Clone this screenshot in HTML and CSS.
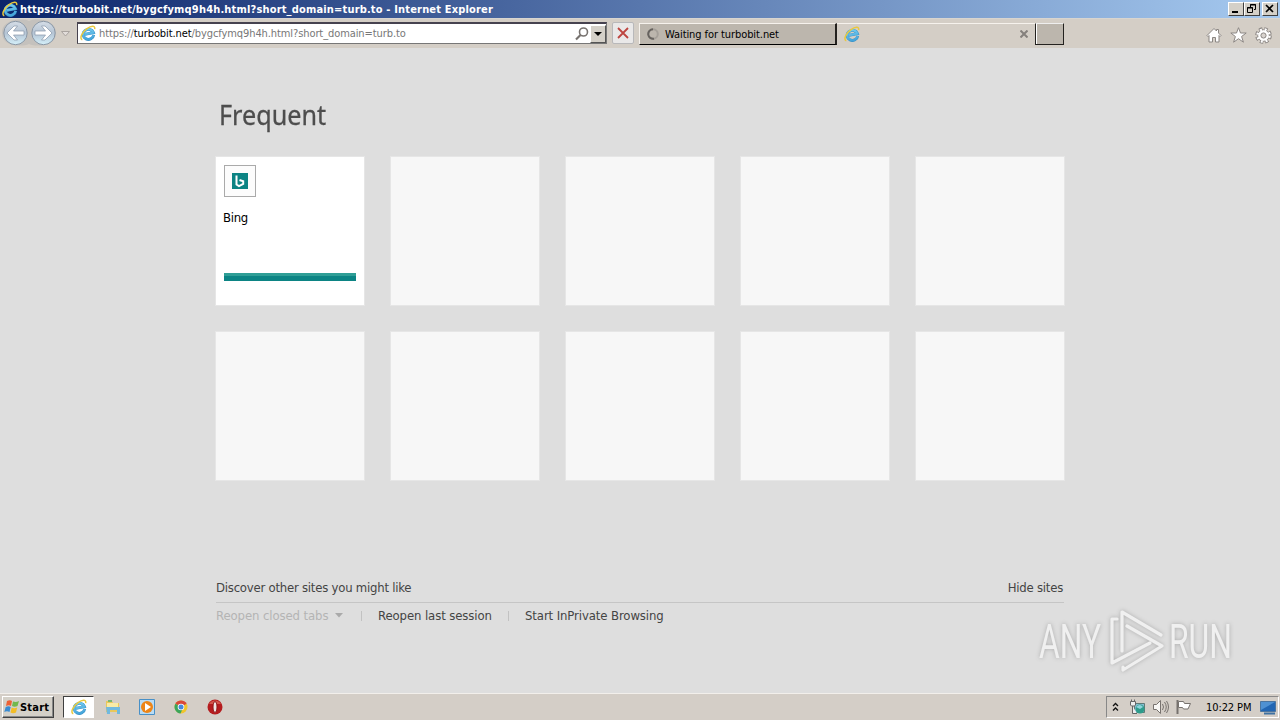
FILE: index.html
```html
<!DOCTYPE html>
<html lang="en">
<head>
  <meta charset="UTF-8">
  <title>https://turbobit.net/bygcfymq9h4h.html?short_domain=turb.to - Internet Explorer</title>
  <link rel="stylesheet" href="styles.css">
</head>
<body>
  <svg class="defs" width="0" height="0">
    <defs>
      <linearGradient id="blue" x1="0" y1="0" x2="0" y2="1">
        <stop offset="0" stop-color="#70c9ee"/>
        <stop offset="1" stop-color="#45a5da"/>
      </linearGradient>
      <linearGradient id="ball" x1="0" y1="0" x2="0" y2="1">
        <stop offset="0" stop-color="#d5dde6"/>
        <stop offset="0.5" stop-color="#b5c4d4"/>
        <stop offset="1" stop-color="#d4f0fa"/>
      </linearGradient>
      <symbol id="ie" viewBox="0 0 16 16">
        <g transform="rotate(-12 8 8)">
          <path d="M13.200 11A5.300 5 0 1 1 13.400 8.700H4.500" fill="none" stroke="#378fc5" stroke-width="2.900"/>
          <path d="M13 11A5.200 5 0 1 1 13.300 8.700H4.500" fill="none" stroke="url(#blue)" stroke-width="2.200"/>
        </g>
        <path d="M2.300 14.700C-.8 14 1.600 7.300 7 3.600c4-2.800 8.400-3.600 7.700.5" fill="none" stroke="#e9c83d" stroke-width="1.500"/>
      </symbol>
    </defs>
  </svg>

  <header class="titlebar">
    <svg class="title-icon" width="16" height="16"><use href="#ie"/></svg>
    <span class="title">https://turbobit.net/bygcfymq9h4h.html?short_domain=turb.to - Internet Explorer</span>
    <div class="window-buttons">
      <button><svg width="12" height="10"><path d="M2 8h6" stroke="#000" stroke-width="2"/></svg></button>
      <button><svg width="12" height="10" fill="none" stroke="#000"><path d="M4.500 3V.500h5v5H8M4 1h6M1.500 3.500h5v5h-5zM1 4h6"/></svg></button>
      <button class="close"><svg width="12" height="10"><path d="M2 1l7 7M9 1L2 8" stroke="#000" stroke-width="1.700"/></svg></button>
    </div>
  </header>

  <nav class="toolbar">
    <svg class="history" width="77" height="30">
      <path d="M2 15C2 1 22 0 29 3c8-3 27-2 27 12S36 29 29 26C22 29 2 29 2 15z" fill="#c4c1bd"/>
      <circle cx="15.500" cy="15" r="11.700" fill="url(#ball)" stroke="#8b98a6"/>
      <circle cx="43.500" cy="15" r="11.700" fill="url(#ball)" stroke="#8b98a6"/>
      <g fill="#fff" stroke="#8797ab" stroke-width=".7">
        <path d="M7 15l7-7h3.500l-4 5H24v4H13.500l4 5H14z"/>
        <path d="M52 15l-7-7h-3.500l4 5H35v4h10.500l-4 5H45z"/>
      </g>
      <path d="M61.500 13.500h8l-4 4.500z" fill="#e2ddda" stroke="#aaa4a0"/>
    </svg>
    <div class="address">
      <svg width="16" height="16"><use href="#ie"/></svg>
      <span class="url">https://<b>turbobit.net</b>/bygcfymq9h4h.html?short_domain=turb.to</span>
      <svg class="search" width="14" height="14" fill="none" stroke="#77726f"><circle cx="8.500" cy="5" r="4" stroke-width="1.600"/><path d="M5.500 8L1 12.500" stroke-width="2.200"/></svg>
      <button class="drop"><svg width="8" height="5"><path d="M0 0h8L4 4z"/></svg></button>
    </div>
    <button class="stop"><svg width="12" height="12"><path d="M1 1l10 10M11 1L1 11" stroke="#bd4540" stroke-width="1.800"/></svg></button>
    <div class="tab waiting">
      <svg width="12" height="12" fill="none" stroke-width="2"><circle cx="6" cy="6" r="4.800" stroke="#a5a099"/><path d="M7 10.700A4.800 4.800 0 1 1 6 1.200" stroke="#67635f"/></svg>
      <span>Waiting for turbobit.net</span>
    </div>
    <div class="tab active">
      <svg width="16" height="16"><use href="#ie"/></svg>
      <svg width="8" height="8"><path d="M.5.500l7 7M7.500.500l-7 7" stroke="#85807c" stroke-width="2"/></svg>
    </div>
    <div class="tab new-tab"></div>
    <div class="tools">
      <svg width="16" height="16"><path d="M1 8.500L8 1.500l2.500 2.500V2.500h2v3.500L15 8.500l-1 1-1-1V15H9.500v-4.500h-3V15H3V8.500l-1 1z" fill="#fff" stroke="#8b8683"/></svg>
      <svg width="17" height="16"><path d="M8.500.700l2 5.300h5.700l-4.600 3.500 1.800 5.700-4.900-3.500-4.900 3.500 1.800-5.700L.8 6h5.700z" fill="#fff" stroke="#8b8683"/></svg>
      <svg width="17" height="17" viewBox="-8.500 -8.500 17 17">
        <circle r="6.300" fill="none" stroke="#8b8683" stroke-width="4" stroke-dasharray="3.100 1.848"/>
        <circle r="5.800" fill="#fff" stroke="#8b8683"/>
        <circle r="6.100" fill="none" stroke="#fff" stroke-width="2.400" stroke-dasharray="1.900 2.891" stroke-dashoffset="-.5"/>
        <circle r="2.600" fill="#d8d3ce" stroke="#8b8683"/>
      </svg>
    </div>
  </nav>

  <main class="page">
    <h1>Frequent</h1>
    <section class="tiles">
      <article class="tile site">
        <div class="favicon"><svg width="16" height="16"><path d="M0 0h16v16H0z" fill="#0c8484"/><path d="M4.500 2.500v9l2.500 1.600 4.200-2.200V8.300L7.500 7" fill="none" stroke="#fff" stroke-width="2"/></svg></div>
        <span>Bing</span>
        <div class="usage"></div>
      </article>
      <article class="tile"></article>
      <article class="tile"></article>
      <article class="tile"></article>
      <article class="tile"></article>
      <article class="tile"></article>
      <article class="tile"></article>
      <article class="tile"></article>
      <article class="tile"></article>
      <article class="tile"></article>
    </section>
    <div class="discover">
      <span class="discover-text">Discover other sites you might like</span>
      <span class="hide">Hide sites</span>
    </div>
    <div class="links">
      <span class="disabled">Reopen closed tabs</span>
      <svg class="caret" width="8" height="5"><path d="M0 0h8L4 4.500z" fill="#aaa"/></svg>
      <i></i>
      <span class="last">Reopen last session</span>
      <i></i>
      <span class="private">Start InPrivate Browsing</span>
    </div>
    <svg class="watermark" width="240" height="80">
      <g font-family="Roboto, sans-serif" font-size="49" fill="#f0f0f0">
        <text x="9" y="53" textLength="62" lengthAdjust="spacingAndGlyphs">ANY</text>
        <text x="139" y="53" textLength="63" lengthAdjust="spacingAndGlyphs">RUN</text>
      </g>
      <g fill="none" stroke="#f0f0f0" stroke-width="3.200" stroke-linejoin="round" stroke-linecap="round">
        <path d="M92 46V7l39 23"/>
        <path d="M87 14h-5v44l38-20"/>
        <path d="M97 21l35 20-39 24v-3"/>
      </g>
    </svg>
  </main>

  <footer class="taskbar">
    <button class="start">
      <svg width="16" height="16"><path d="M3 2q3-1.500 5 0L7 7Q5 5.500 2 7z" fill="#ed6135"/><path d="M9 2.500q3 1 6-.5l-1.500 5q-3 1.500-5.500 0z" fill="#72b84d"/><path d="M1.700 8q3-1.500 5 0l-1.200 5Q3 11.500.300 13z" fill="#398bd2"/><path d="M7.700 8.500q2.500 1.500 5.500 0L12 13.500q-3 1.500-5.500 0z" fill="#f3bd27"/></svg>
      Start
    </button>
    <div class="task"><svg width="16" height="16"><use href="#ie"/></svg></div>
    <div class="launch">
      <svg width="16" height="16"><path d="M1 2h6l1 2h6v9H1z" fill="#e9c85b"/><path d="M2 4h11v5H2z" fill="#f8eba6"/><path d="M1 8h14v7h-3v-4H5v4H2z" fill="#70b9df"/><path d="M3 1h4v2H3z" fill="#78b672"/></svg>
      <svg width="16" height="16"><path d="M.5.500h15v15H.5z" fill="#b9dcf5" stroke="#4890c7"/><circle cx="8" cy="8" r="6" fill="#ed8518"/><path d="M6 4l6 4-6 4z" fill="#fff"/></svg>
      <svg width="16" height="16"><circle cx="8" cy="8" r="6.500" fill="#f0c52d"/><path d="M8 8L2.400 4.700A6.500 6.500 0 0 1 13.600 4.700z" fill="#d94839"/><path d="M8 8L2.400 4.700A6.500 6.500 0 0 0 7.500 14.500L10 9z" fill="#3ba55c"/><circle cx="8" cy="8" r="3.300" fill="#fff"/><circle cx="8" cy="8" r="2.500" fill="#4688dc"/></svg>
      <svg width="16" height="16"><circle cx="8" cy="8" r="7.500" fill="#b51c1e"/><path d="M2 5a7 7 0 0 1 12 0z" fill="#d3564c"/><ellipse cx="8" cy="8" rx="2" ry="5.500" fill="#f0e6e3" stroke="#8f1719"/></svg>
    </div>
    <div class="tray">
      <svg class="chevrons" width="8" height="11" fill="none" stroke="#111" stroke-width="1.300"><path d="M1 4l2.500-2.500L6 4M1 8.500L3.500 6 6 8.500"/></svg>
      <svg class="network" width="17" height="17"><path d="M5.500 4.500h10v9h-10z" fill="#85bdd1" stroke="#5f7a77"/><circle cx="11" cy="10" r="4.500" fill="#2e9c8b"/><path d="M7 8q4-4 7 0l-3 2z" fill="#8fd4dd"/><path d="M1.500 2.500h5V6l-1 1h-3l-1-1zM2.500.500v2M5.500.500v2M3.500 7v7.500H8" fill="#eee" stroke="#666"/></svg>
      <svg class="volume" width="17" height="16" fill="none" stroke="#77726e"><path d="M1.500 5.500h3l4-4v13l-4-4h-3z" fill="#f8f7f5"/><path d="M10.500 5q2 3 0 6M12.500 3q3.500 5 0 10M14.500 2q4 6 0 12"/></svg>
      <svg class="flag" width="17" height="16"><path d="M2.500 1v14" stroke="#77726e" stroke-width="2"/><path d="M3.500 2.500h5l1 2h6L13 10H8.500l-1-1.500h-4z" fill="#fff" stroke="#77726e"/></svg>
      <span class="clock">10:22 PM</span>
      <svg class="desktop" width="16" height="15"><path d="M.5 1.500h15v10H.5z" fill="#2266b3" stroke="#4c759f"/><path d="M1 2h14L1 10z" fill="#4f91d2"/><path d="M4 13.500h11" stroke="#3e71a1" stroke-width="2"/></svg>
    </div>
  </footer>
</body>
</html>
```
FILE: styles.css
```css
* {
  box-sizing: border-box;
}

body {
  width: 1280px;
  height: 720px;
  margin: 0;
  overflow: hidden;
  display: flex;
  flex-direction: column;
  background: #dedede;
  font-family: "DejaVu Sans Condensed", "DejaVu Sans", sans-serif;
  font-size: 11px;
  color: #000;
}

svg {
  display: block;
  flex: none;
}

button {
  padding: 0;
  border: 0;
  font: inherit;
  color: inherit;
}

span {
  white-space: nowrap;
}

.defs {
  position: absolute;
}

.titlebar {
  height: 18px;
  flex: none;
  display: flex;
  align-items: center;
  padding: 0 2px;
  background: linear-gradient(90deg, #0a246a, #a6caf0);
}

.title {
  margin-left: 2px;
  color: #fff;
  font-weight: bold;
  letter-spacing: 0.17px;
}

.window-buttons {
  display: flex;
  margin-left: auto;
}

.window-buttons button {
  width: 16px;
  height: 14px;
  padding: 1px;
  background: #d4d0c8;
  border: 1px solid;
  border-color: #fff #404040 #404040 #fff;
}

.window-buttons .close {
  margin-left: 2px;
}

.toolbar {
  height: 30px;
  flex: none;
  display: flex;
  background: #d4cec6;
  border-top: 1px solid #d8d5d0;
}

.history {
  margin-top: -1px;
}

.address {
  width: 530px;
  height: 22px;
  margin-top: 3px;
  padding-left: 2px;
  display: flex;
  align-items: center;
  background: #fff;
  border: 1px solid #777;
  border-top: 2px solid #46424f;
  border-left-color: #46424f;
}

.address > svg:first-child {
  margin-top: -2px;
}

.url {
  margin-left: 3px;
  color: #777;
  letter-spacing: -0.09px;
}

.url b {
  color: #000;
  font-weight: normal;
}

.search {
  margin-left: auto;
}

.drop {
  width: 16px;
  height: 18px;
  margin-left: 1px;
  padding: 1px 3px 0;
  background: #d4d0c8;
  border: 1px solid;
  border-color: #fff #555 #555 #fff;
}

.stop {
  width: 22px;
  height: 22px;
  margin: 3px 5px 0 5px;
  padding: 4px;
  background: #e9e8e8;
  border: 1px solid #b8b8ba;
  border-radius: 2px;
}

.tab {
  height: 22px;
  display: flex;
  align-items: center;
  margin-top: 4px;
  border-top: 1px solid #f6f2ed;
}

.waiting {
  width: 198px;
  padding-left: 7px;
  background: #bcb6ad;
  border-left: 1px solid #f6f2ed;
  border-right: 2px solid #24221f;
  border-bottom: 1px solid #000;
}

.waiting span {
  margin-left: 6px;
  letter-spacing: -0.08px;
}

.active {
  width: 198px;
  padding: 0 7px;
  justify-content: space-between;
}

.active svg {
  margin-top: -2px;
}

.new-tab {
  width: 29px;
  background: #bcb6ad;
  border: 1px solid #24221f;
  border-top-color: #eee;
  box-shadow: inset 1px 0 #fff;
}

.tools {
  display: flex;
  align-items: center;
  gap: 8px;
  margin-left: auto;
  padding: 3px 8px 0 0;
}

.page {
  position: relative;
  flex: 1;
  width: 848px;
  margin: 0 auto;
  padding-top: 48px;
}

h1 {
  height: 36px;
  margin: 0 0 25px 3px;
  color: #4d4d4d;
  font: 28px/36px "Noto Sans", sans-serif;
  transform: scaleX(0.9);
  transform-origin: left;
  -webkit-text-stroke: 0.3px #4d4d4d;
}

.tiles {
  display: grid;
  grid-template-columns: repeat(5, 148px);
  grid-auto-rows: 148px;
  gap: 27px;
}

.tile {
  background: #f7f7f7;
  box-shadow: 0 0 0 1px #e6e6e6;
}

.site {
  padding: 8px;
  background: #fff;
  font-size: 13px;
}

.favicon {
  width: 32px;
  height: 32px;
  padding: 7px;
  background: #fcfcfc;
  border: 1px solid #aaa;
}

.site span {
  display: block;
  height: 16px;
  margin: 13px 0 47px -1px;
  line-height: 16px;
  letter-spacing: -0.3px;
}

.usage {
  height: 8px;
  background: #0c8484;
  border-top: 3px solid #2f9e96;
}

.discover {
  height: 23px;
  margin-top: 100px;
  display: flex;
  justify-content: space-between;
  color: #444;
  border-bottom: 1px solid #c5c5c5;
  font-size: 13px;
  line-height: 16px;
  letter-spacing: -0.23px;
}

.hide {
  margin-right: 1px;
}

.links {
  height: 25px;
  display: flex;
  align-items: center;
  color: #444;
  font-size: 13px;
  letter-spacing: -0.1px;
}

.disabled {
  width: 112px;
  color: #b4b4b4;
}

.caret {
  margin-left: 7px;
}

.links i {
  width: 1px;
  height: 10px;
  margin: 0 16px 0 18px;
  background: #c2c2c2;
}

.last {
  width: 114px;
}

.links .last + i {
  margin-left: 16px;
}

.watermark {
  position: absolute;
  left: 814px;
  top: 557px;
  filter: drop-shadow(0 0 2px #aaa);
}

.taskbar {
  height: 27px;
  flex: none;
  display: flex;
  align-items: center;
  background: #d4cec7;
  border-top: 1px solid #f2efeb;
}

.start {
  width: 52px;
  height: 22px;
  margin-left: 2px;
  padding-left: 1px;
  display: flex;
  align-items: center;
  background: #d4d0c8;
  border: 1px solid;
  border-color: #fff #404040 #404040 #fff;
  box-shadow: inset -1px -1px #888;
  font-weight: bold;
  letter-spacing: 0.2px;
}

.task {
  width: 31px;
  height: 22px;
  margin-left: 9px;
  padding: 2px 0 0 7px;
  background: #fff;
  border: 1px solid;
  border-color: #404040 #fff #fff #404040;
}

.launch {
  display: flex;
  gap: 18px;
  margin-left: 11px;
}

.tray {
  width: 173px;
  height: 22px;
  margin-left: auto;
  margin-right: 1px;
  padding-left: 5px;
  display: flex;
  align-items: center;
  border: 1px solid;
  border-color: #888 #fff #fff #888;
}

.network {
  margin-left: 9px;
}

.volume,
.flag {
  margin-left: 6px;
}

.clock {
  width: 46px;
  margin-left: 14px;
  letter-spacing: -0.1px;
}

.desktop {
  margin-left: 8px;
}
```
